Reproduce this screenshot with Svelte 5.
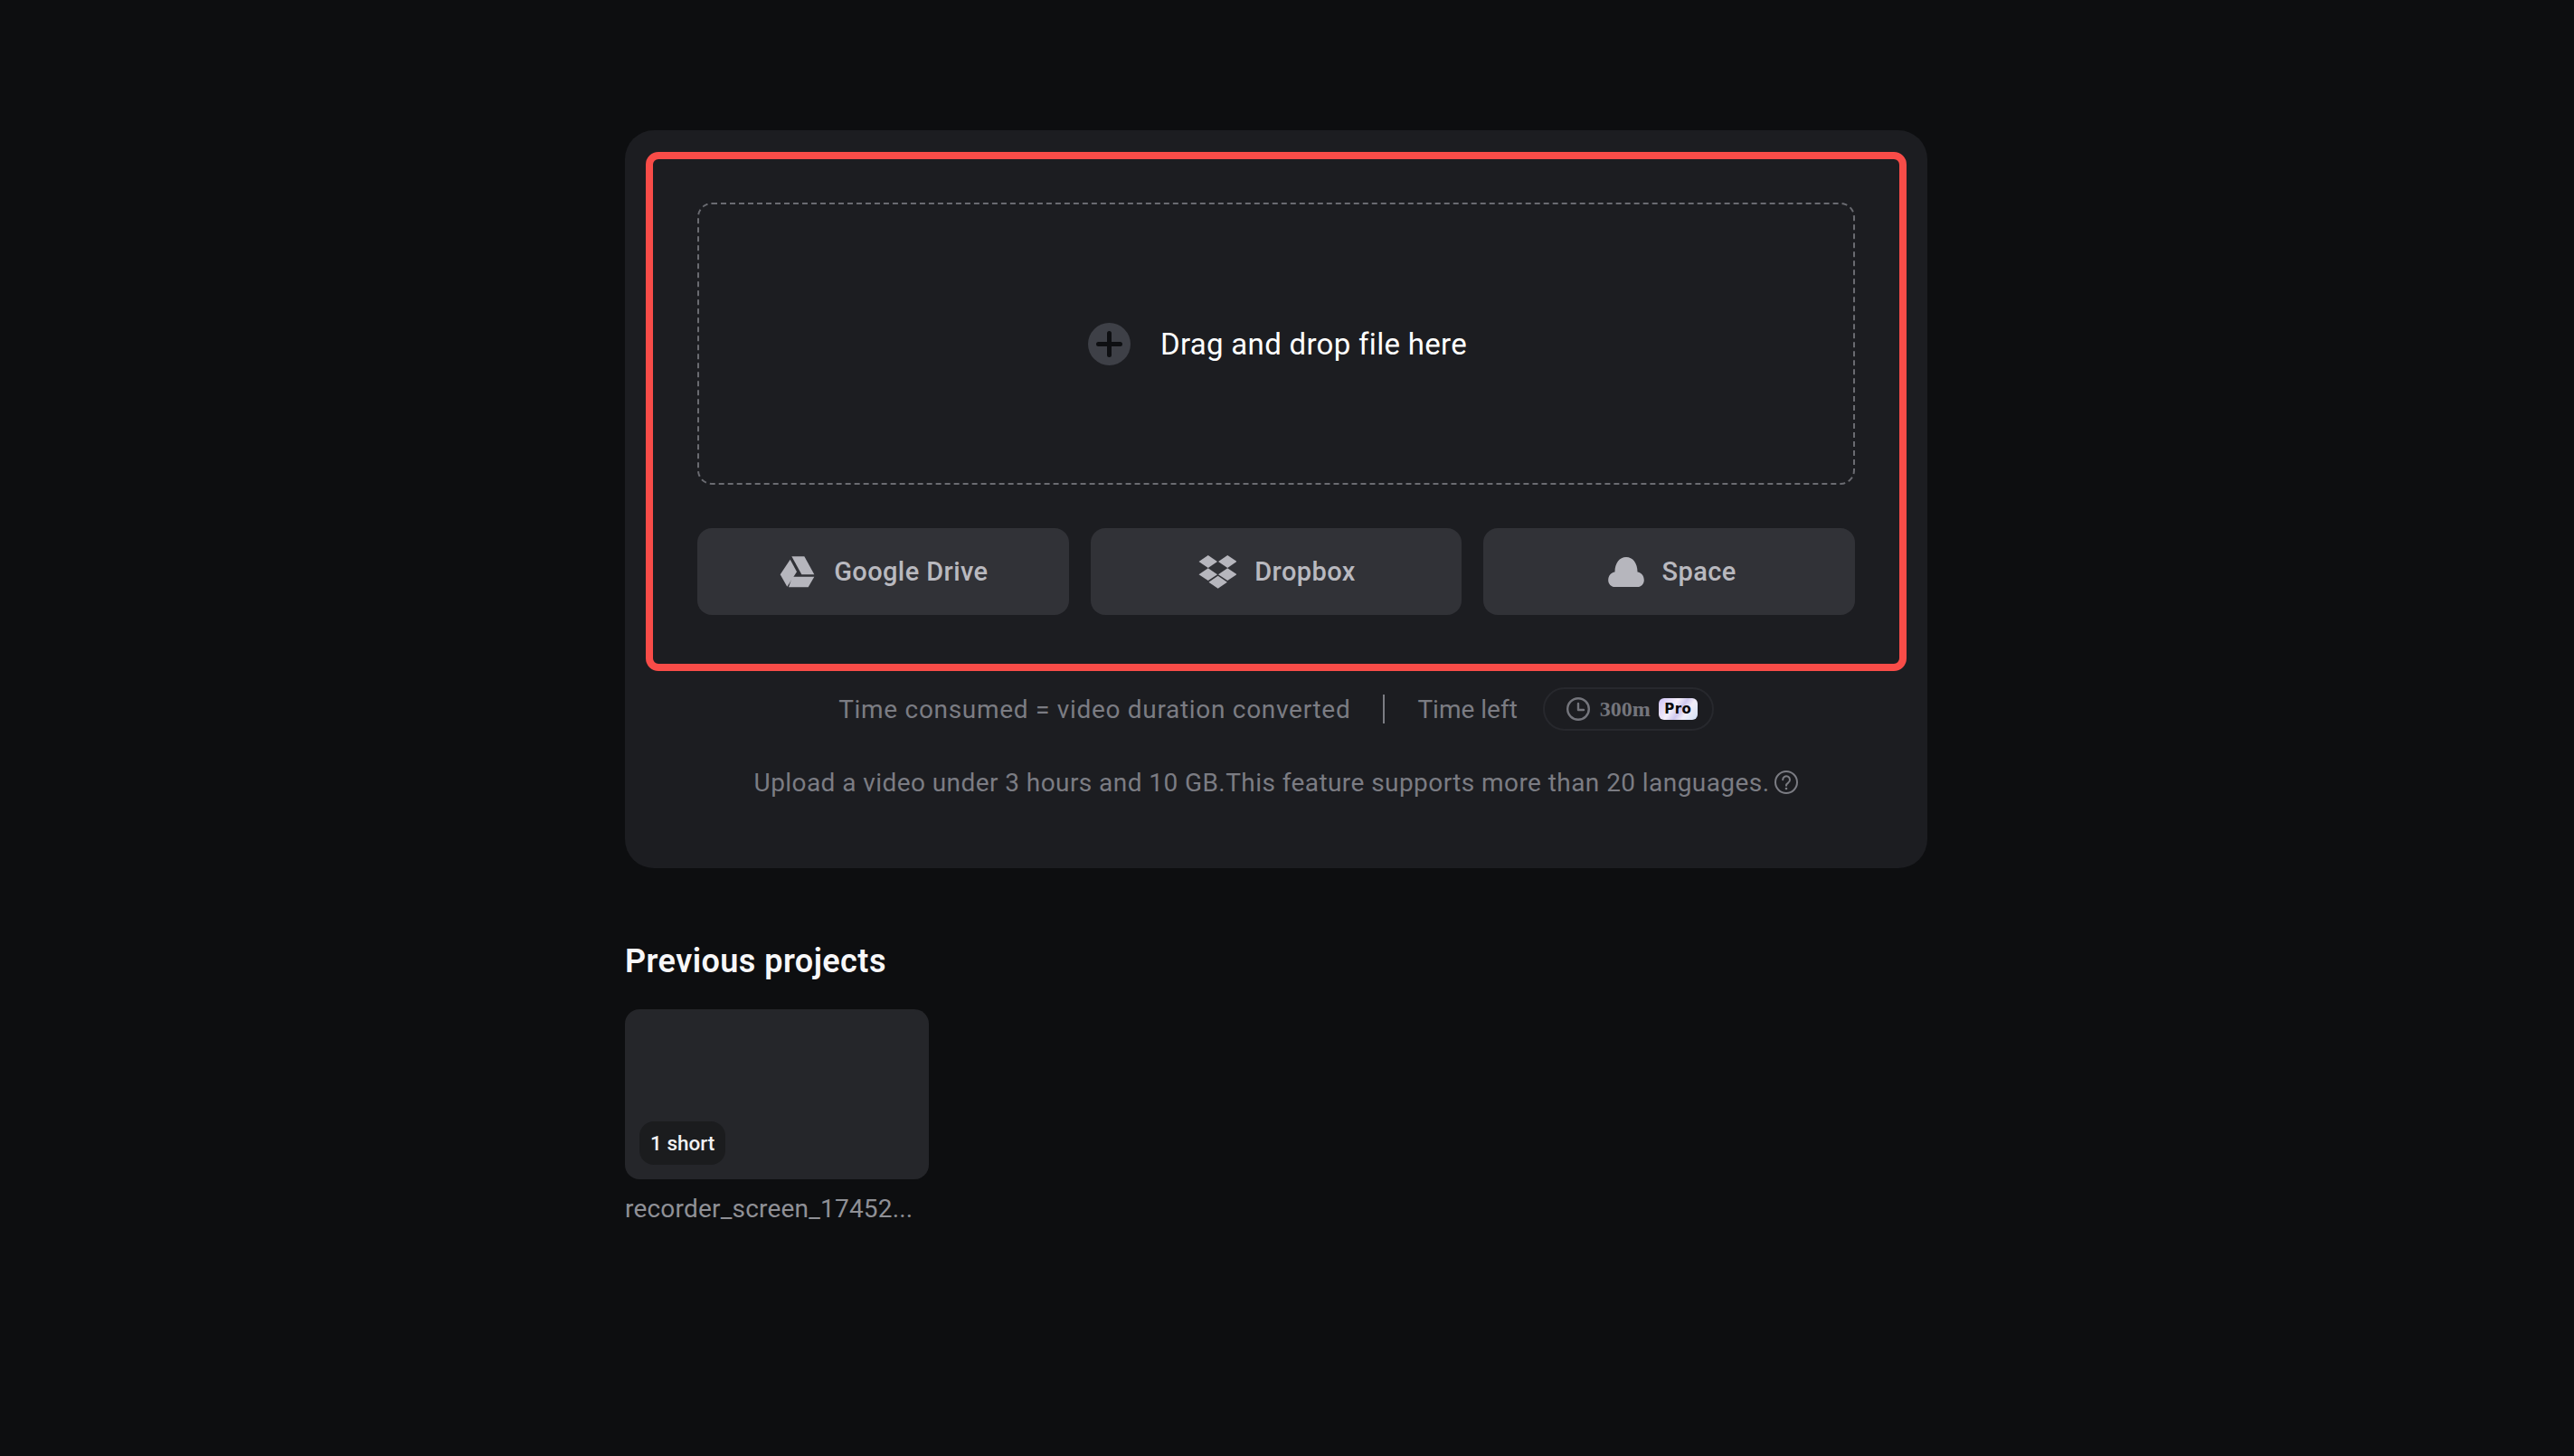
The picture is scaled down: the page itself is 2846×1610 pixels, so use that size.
<script lang="ts">
	const sources = [
		{ id: 'drive', label: 'Google Drive' },
		{ id: 'dropbox', label: 'Dropbox' },
		{ id: 'space', label: 'Space' }
	]
</script>

<main>
	<section class="card">
		<div class="upload">
			<div class="drop">
				<svg class="plus" width="47" height="47" viewBox="0 0 47 47">
					<circle cx="23.5" cy="23.5" r="23.5" fill="#3e4047" />
					<path d="M11.5 23.5h24M23.5 11.5v24" stroke="#0e0f12" stroke-width="5" stroke-linecap="round" />
				</svg>
				<span class="drop-text">Drag and drop file here</span>
			</div>
			<div class="sources">
				{#each sources as s}
					<button class="source">
						{#if s.id === 'drive'}
							<svg width="40" height="35" viewBox="0 0 120 105" fill="#b6b6bd">
								<path d="M40 1H82L115 61H73Z" />
								<path d="M35 11L57 52L25 101L2 61Z" />
								<path d="M42 68H115L95 103H30Z" />
							</svg>
						{:else if s.id === 'dropbox'}
							<svg width="42" height="37" viewBox="0 0 126 112" fill="#b6b6bd">
								<path d="M32 0L63 21L32 42L1 21Z" />
								<path d="M97 0L128 21L97 42L66 21Z" />
								<path d="M32 43L63 64L32 85L1 64Z" />
								<path d="M97 43L128 64L97 85L66 64Z" />
								<path d="M65 69L96 90L65 111L34 90Z" />
							</svg>
						{:else}
							<svg class="cloud" width="40" height="33" viewBox="0 0 120 100" fill="#b6b6bd">
								<path d="M22 100C10 100 0 90 0 77C0 62 10 52 22 50C22 20 38 0 60 0C82 0 98 20 98 50C110 52 120 62 120 77C120 90 110 100 98 100Z" />
							</svg>
						{/if}
						<span>{s.label}</span>
					</button>
				{/each}
			</div>
		</div>

		<div class="quota">
			<span class="consumed">Time consumed = video duration converted</span>
			<i class="divider"></i>
			<span>Time left</span>
			<div class="pill">
				<svg width="26" height="26" viewBox="0 0 26 26" fill="none" stroke="#74757c" stroke-width="2.4">
					<circle cx="13" cy="13" r="11.8" />
					<path d="M13 7v7h6" stroke-linecap="round" stroke-linejoin="round" />
				</svg>
				<b class="mins">300m</b>
				<span class="pro">Pro</span>
			</div>
		</div>

		<p class="limits">
			<span>Upload a video under 3 hours and 10 GB.This feature supports more than 20 languages.</span>
			<svg width="26" height="26" viewBox="0 0 26 26" fill="none" stroke="#7b7c83" stroke-width="2">
				<circle cx="13" cy="13" r="12" />
				<path d="M9.2 10.2a3.9 3.9 0 1 1 6.2 3.1c-1.4 1-2.4 1.7-2.4 3.4" stroke-linecap="round" />
				<circle cx="13" cy="20" r="1.3" fill="#7b7c83" stroke="none" />
			</svg>
		</p>
	</section>

	<h2>Previous projects</h2>
	<div class="project">
		<div class="thumb">
			<span class="badge">1 short</span>
		</div>
		<div class="name">recorder_screen_17452...</div>
	</div>
</main>

<style>
	:global(body) { background: #0d0e10; }

	main {
		width: 1440px; margin-left: 691px; padding-top: 144px; height: 1466px;
		font-family: Roboto, sans-serif; color: #fff;
	}

	.card {
		box-sizing: border-box; height: 816px; padding: 24px 23px 0;
		background: #1c1d21; border-radius: 32px;
	}

	.upload {
		box-sizing: border-box; height: 574px; padding: 48px 49px 0;
		border: 8px solid #f84c48; border-radius: 14px;
	}

	.drop {
		box-sizing: border-box; height: 312px; padding-left: 3px;
		display: flex; align-items: center; justify-content: center; gap: 33px;
		border: 2px dashed #6a6b71; border-radius: 16px;
	}
	.drop-text { font-size: 33px; letter-spacing: .3px; color: #fff; }

	.sources { display: grid; grid-template-columns: repeat(3, 1fr); gap: 24px; margin-top: 48px; }
	.source {
		height: 96px; padding: 0 0 0 2px; display: flex; align-items: center; justify-content: center; gap: 20px;
		background: #313237; color: #b9b9bf; border: none; border-radius: 16px;
		font-family: inherit; font-size: 29px; font-weight: 500; letter-spacing: .4px;
	}
	.cloud { margin-left: 4px; }

	.quota {
		display: flex; align-items: center; justify-content: center; height: 48px; margin-top: 18px;
		font-size: 28px; color: #7b7c83;
	}
	.consumed { letter-spacing: .7px; }
	.divider { width: 2px; height: 32px; margin: 0 36px; background: #7b7c83; }
	.pill {
		box-sizing: border-box; height: 48px; margin-left: 28px; padding: 0 16px 0 24px;
		display: flex; align-items: center;
		border: 2px solid #27282d; border-radius: 24px;
	}
	.mins { margin-left: 11px; font-family: "Liberation Serif", serif; font-size: 24px; font-weight: 700; color: #74757c; }
	.pro {
		width: 43px; height: 24px; margin-left: 9px;
		display: flex; align-items: center; justify-content: center;
		background: linear-gradient(125deg, #cfc2f7 0%, #f4eef9 38%, #cfc8ef 55%, #f2eef8 70%, #cfe0f7 100%);
		border-radius: 6px; color: #08080a;
		font-family: "DejaVu Sans", sans-serif; font-size: 15px; font-weight: 700; letter-spacing: .5px;
	}

	.limits {
		display: flex; align-items: center; justify-content: center; gap: 6px;
		height: 40px; margin: 37px 0 0; font-size: 28px; letter-spacing: .43px; color: #7b7c83;
	}

	h2 {
		height: 48px; margin: 79px 0 29px;
		font-size: 36px; line-height: 48px; font-weight: 600; letter-spacing: .45px; color: #f7f7f9;
	}

	.thumb {
		box-sizing: border-box; width: 336px; height: 188px; padding: 0 0 16px 16px;
		display: flex; align-items: flex-end;
		background: #25262a; border-radius: 16px;
	}
	.badge {
		height: 48px; padding: 0 12px; display: flex; align-items: center;
		background: #1b1c1e; border-radius: 16px; font-size: 22.5px; font-weight: 500; color: #f2f2f4;
	}
	.name { margin-top: 13px; font-size: 28px; letter-spacing: .2px; line-height: 40px; color: #8f9096; }
</style>
